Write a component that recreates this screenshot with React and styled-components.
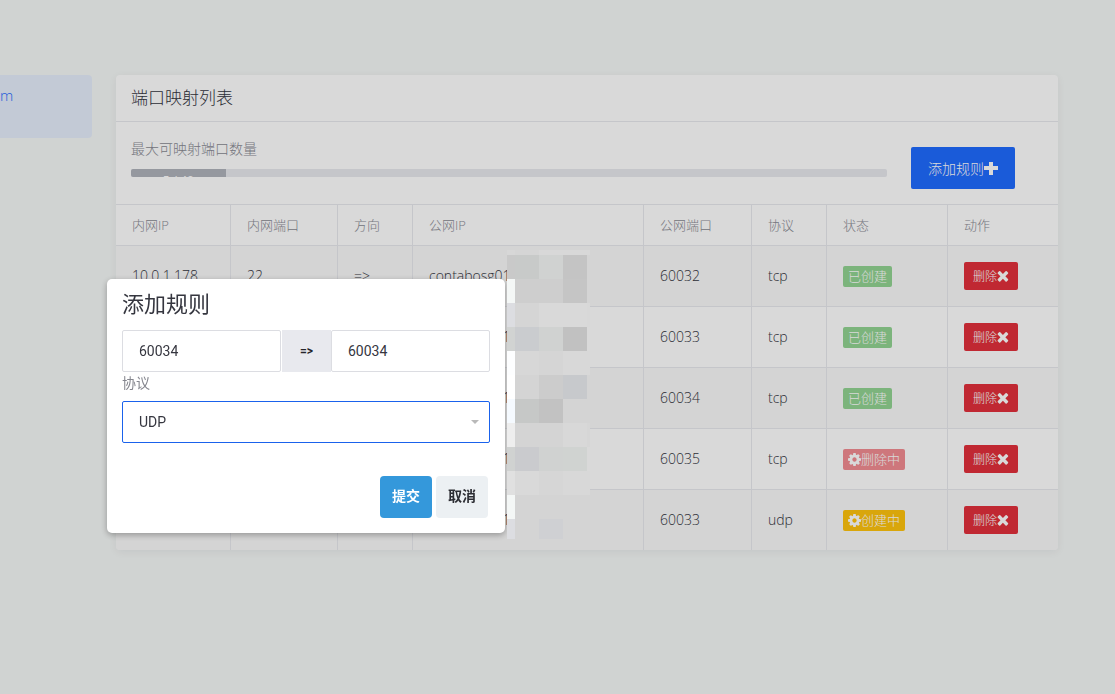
import React, {useState} from 'react'
import styled, {createGlobalStyle} from 'styled-components'

const columns = [
  {text: '内网IP', width: 114},
  {text: '内网端口', width: 107},
  {text: '方向', width: 75},
  {text: '公网IP', width: 231},
  {text: '公网端口', width: 108},
  {text: '协议', width: 75},
  {text: '状态', width: 121},
  {text: '动作', width: 111},
]

const rules = [
  {id: 1, port: '22', publicPort: '60032', protocol: 'tcp', status: 'created'},
  {id: 2, port: '22', publicPort: '60033', protocol: 'tcp', status: 'created'},
  {id: 3, port: '22', publicPort: '60034', protocol: 'tcp', status: 'created'},
  {id: 4, port: '22', publicPort: '60035', protocol: 'tcp', status: 'deleting'},
  {id: 5, port: '22', publicPort: '60033', protocol: 'udp', status: 'creating'},
]

const statuses = {
  created: {text: '已创建', color: '#92d492'},
  deleting: {text: '删除中', color: '#f28c92', busy: true},
  creating: {text: '创建中', color: '#ffc30e', busy: true},
}

// colours of the mask, row by row; '' lets the page show through
const maskTiles = [
  ['#d7d7d7', '#d5d5d5', '#d8d8d8', '#d8d8d8', '#d8d8d8'],
  ['#c9c9c9', '#c8cac9', '#d0d2d1', '#c4c4c4', ''],
  ['#f4f7f6', '#cecece', '#cecece', '#c5c5c5', ''],
  ['#dcdde1', '#d5d5d5', '#d9d9d9', '#d9d9d9', '#d8d8d8'],
  ['#d1d3d2', '#cacccf', '#d0d2d1', '#c1c1c1', ''],
  ['#fdfeff', '#d7d7d7', '#d5d5d5', '#d8d8d8', '#d8d8d8'],
  ['#ffffff', '#d4d4d4', '#cccccc', '#c7c9cc', ''],
  ['#f5faff', '#c6c8c7', '#c2c2c2', '#d4d4d4', ''],
  ['#eeeeee', '#d4d4d4', '#d4d4d4', '#d8d8d8', '#d6d6d6'],
  ['#d0d2d1', '#cacbce', '#d0d2d1', '#d0d3d1', ''],
  ['#e0e0e0', '#d9d9d9', '#d6d6d6', '#d8d8d8', '#d8d8d8'],
  ['#f4f7f6', '#d4d4d4', '#d4d4d4', '#d4d4d4', ''],
  ['#dcdde1', '#d4d4d4', '#cfd0d3', '#d4d4d4', ''],
]

const PlusIcon = () => (
  <Icon size={14} viewBox="0 0 14 14" aria-hidden="true">
    <path d="M5 1h4v4h5v4H9v5H5V9H0V5h5z" />
  </Icon>
)

const CrossIcon = () => (
  <Icon size={12} viewBox="256 250 1300 1340" aria-hidden="true">
    <path d="M1490 1322q0 40-28 68l-136 136q-28 28-68 28t-68-28l-294-294-294 294q-28 28-68 28t-68-28l-136-136q-28-28-28-68t28-68l294-294-294-294q-28-28-28-68t28-68l136-136q28-28 68-28t68 28l294 294 294-294q28-28 68-28t68 28l136 136q28 28 28 68t-28 68l-294 294 294 294q28 28 28 68z" />
  </Icon>
)

const GearIcon = () => (
  <Icon size={13} viewBox="128 128 1536 1536" aria-hidden="true">
    <path d="M1152 896q0-106-75-181t-181-75-181 75-75 181 75 181 181 75 181-75 75-181zm512-109v222q0 12-8 23t-20 13l-185 28q-19 54-39 91 35 50 107 138 10 12 10 25t-9 23q-27 37-99 108t-94 71q-12 0-26-9l-138-108q-44 23-91 38-16 136-29 186-7 28-36 28h-222q-14 0-24.500-8.500t-11.500-21.500l-28-184q-49-16-90-37l-141 107q-10 9-25 9-14 0-25-11-126-114-165-168-7-10-7-23 0-12 8-23 15-21 51-66.500t54-70.500q-27-50-41-99l-183-27q-13-2-21-12.500t-8-23.500v-222q0-12 8-23t19-13l186-28q14-46 39-92-40-57-107-138-10-12-10-24 0-10 9-23 26-36 98.500-107.500t94.500-71.500q13 0 26 10l138 107q44-23 91-38 16-136 29-186 7-28 36-28h222q14 0 24.500 8.500t11.500 21.500l28 184q49 16 90 37l142-107q9-9 24-9 13 0 25 10 129 119 165 170 7 8 7 22 0 12-8 23-15 21-51 66.500t-54 70.500q26 50 41 98l183 28q13 2 21 12.500t8 23.500z" />
  </Icon>
)

const RuleTable = () => (
  <Table>
    <colgroup>
      {columns.map((column) => (
        <Col key={column.text} $width={column.width} />
      ))}
    </colgroup>
    <thead>
      <tr>
        {columns.map((column) => (
          <HeadCell key={column.text} scope="col">{column.text}</HeadCell>
        ))}
      </tr>
    </thead>
    <tbody>
      {rules.map((rule) => {
        const status = statuses[rule.status]
        return (
          <Row key={rule.id}>
            <Cell>10.0.1.178</Cell>
            <Cell>{rule.port}</Cell>
            <Cell>=&gt;</Cell>
            <Cell>contabosg01</Cell>
            <Cell>{rule.publicPort}</Cell>
            <Cell>{rule.protocol}</Cell>
            <Cell>
              <Badge $color={status.color}>
                {status.busy && <GearIcon />}
                {status.text}
              </Badge>
            </Cell>
            <Cell>
              <DeleteButton type="button">删除<CrossIcon /></DeleteButton>
            </Cell>
          </Row>
        )
      })}
    </tbody>
  </Table>
)

const RuleDialog = () => {
  const [from, setFrom] = useState('60034')
  const [to, setTo] = useState('60034')
  const [protocol, setProtocol] = useState('UDP')

  return (
    <Dialog role="dialog" aria-labelledby="dialog-title">
      <DialogTitle id="dialog-title">添加规则</DialogTitle>
      <PortGroup>
        <PortInput aria-label="内网端口" value={from} onChange={(e) => setFrom(e.target.value)} />
        <Arrow>=&gt;</Arrow>
        <PortInput aria-label="公网端口" value={to} onChange={(e) => setTo(e.target.value)} />
      </PortGroup>
      <FieldLabel htmlFor="protocol">协议</FieldLabel>
      <SelectWrap>
        <Select id="protocol" value={protocol} onChange={(e) => setProtocol(e.target.value)}>
          <option>TCP</option>
          <option>UDP</option>
        </Select>
      </SelectWrap>
      <DialogActions>
        <DialogButton type="button" $primary>提交</DialogButton>
        <DialogButton type="button">取消</DialogButton>
      </DialogActions>
    </Dialog>
  )
}

const App = () => (
  <>
    <GlobalStyle />
    <Page>
      <Sidebar>
        <SideLink href="#host">m</SideLink>
      </Sidebar>
      <Card>
        <CardHeader>
          <CardTitle>端口映射列表</CardTitle>
        </CardHeader>
        <Summary>
          <Quota>
            <QuotaLabel id="quota">最大可映射端口数量</QuotaLabel>
            <Track role="progressbar" aria-labelledby="quota" aria-valuenow={5} aria-valuemax={40}>
              <Fill style={{width: `${(5 / 40) * 100}%`}}>5 / 40</Fill>
            </Track>
          </Quota>
          <AddButton type="button">添加规则<PlusIcon /></AddButton>
        </Summary>
        <RuleTable />
      </Card>
    </Page>
    <Backdrop />
    <RuleDialog />
    <Mask aria-hidden="true">
      {maskTiles.flat().map((color, i) => (
        <Tile key={i} $color={color} />
      ))}
    </Mask>
  </>
)

const GlobalStyle = createGlobalStyle`
  *, *::before, *::after {
    box-sizing: border-box;
  }

  body {
    margin: 0;
    overflow: hidden;
    color: #35363f;
    background-color: #f5f8f7;
    font-family: "Open Sans", "Noto Sans CJK SC", sans-serif;
    font-size: 14px;
    font-weight: 300;
    line-height: 20px;
  }

  button, input, select {
    font-family: inherit;
    font-size: inherit;
    font-weight: inherit;
  }
`

const Icon = styled.svg`
  flex: none;
  width: ${({size}) => size}px;
  height: ${({size}) => size}px;
  fill: currentColor;
`

const Page = styled.main`
  display: grid;
  grid-template-columns: 92px minmax(0, 1fr);
  align-items: start;
  gap: 24px;
  min-height: 100vh;
  padding: 75px 57px 75px 0;
`

const Sidebar = styled.nav`
  display: flex;
  flex-direction: column;
`

const SideLink = styled.a`
  height: 63px;
  padding: 10px 0;
  border-radius: 0 4px 4px 0;
  color: #1f6bff;
  background-color: #e6eefc;
  font-size: 15px;
  text-decoration: none;
`

const Card = styled.section`
  overflow: hidden;
  border-radius: 4px;
  background-color: #fff;
  box-shadow: 0 2px 8px rgba(0, 0, 40, 0.06);
`

const CardHeader = styled.header`
  padding: 11px 15px;
  border-bottom: 1px solid #e8e9ee;
`

const CardTitle = styled.h2`
  margin: 0;
  font-size: 17px;
  font-weight: 300;
  line-height: 24px;
`

const Summary = styled.div`
  display: flex;
  align-items: flex-start;
  gap: 24px;
  padding: 17px 43px 15px 15px;
`

const Quota = styled.div`
  flex: 1;
`

const QuotaLabel = styled.div`
  margin-bottom: 10px;
  color: #8a8b94;
`

const Track = styled.div`
  height: 8px;
  overflow: hidden;
  border-radius: 2px;
  background-color: #e8e9ee;
`

const Fill = styled.div`
  height: 100%;
  color: #fff;
  background-color: #b0b3bb;
  font-size: 12px;
  font-weight: 400;
  line-height: 24px;
  text-align: center;
`

const AddButton = styled.button`
  display: flex;
  align-items: center;
  height: 42px;
  margin-top: 8px;
  padding: 0 17px;
  border: 0;
  border-radius: 2px;
  color: #fff;
  background-color: #1f6bff;
`

const Table = styled.table`
  width: 100%;
  border-collapse: separate;
  border-spacing: 0;
  table-layout: fixed;
`

const Col = styled.col`
  width: ${({$width}) => $width}px;
`

const HeadCell = styled.th`
  height: 41px;
  padding: 0 16px;
  border-top: 1px solid #e8e9ee;
  color: #8a8b94;
  font-size: 13px;
  font-weight: 300;
  text-align: left;

  & + & {
    border-left: 1px solid #e8e9ee;
  }
`

const Cell = styled.td`
  height: 61px;
  padding: 0 16px;
  border-top: 1px solid #e8e9ee;

  & + & {
    border-left: 1px solid #e8e9ee;
  }
`

const Row = styled.tr`
  &:nth-child(odd) {
    background-color: #f9f9f9;
  }
`

const Badge = styled.span`
  display: inline-flex;
  align-items: center;
  height: 21px;
  padding: 0 5px;
  border-radius: 2px;
  color: #fff;
  background-color: ${({$color}) => $color};
  font-size: 13px;
  vertical-align: middle;
`

const DeleteButton = styled.button`
  display: flex;
  align-items: center;
  height: 28px;
  padding: 0 9px;
  border: 0;
  border-radius: 2px;
  color: #fff;
  background-color: #e2303b;
  font-size: 12px;
`

const Backdrop = styled.div`
  position: fixed;
  inset: 0;
  background-color: rgba(0, 0, 0, 0.15);
`

const Dialog = styled.div`
  position: fixed;
  top: 279px;
  left: 107px;
  width: 398px;
  padding: 12px 15px 15px;
  border-radius: 5px;
  background-color: #fff;
  box-shadow: 0 2px 6px rgba(0, 0, 0, 0.3);
  font-family: Roboto, "Noto Sans CJK SC", sans-serif;
`

const DialogTitle = styled.h3`
  margin: 0 0 11px;
  font-size: 22px;
  font-weight: 400;
  line-height: 28px;
`

const PortGroup = styled.div`
  display: flex;
`

const PortInput = styled.input`
  flex: 1;
  min-width: 0;
  height: 42px;
  padding: 0 16px;
  border: 1px solid #dcdde2;
  border-radius: 2px;
  color: #35363f;
  font-weight: 400;
  outline: none;
`

const Arrow = styled.span`
  width: 49px;
  margin-left: 1px;
  color: #24252b;
  background-color: #e8e9ee;
  font-size: 12px;
  font-weight: 700;
  line-height: 42px;
  text-align: center;
`

const FieldLabel = styled.label`
  display: block;
  margin: 1px 0 8px;
  color: #85868e;
  font-weight: 400;
`

const SelectWrap = styled.div`
  position: relative;

  &::after {
    content: '';
    position: absolute;
    top: 19px;
    right: 11px;
    border: 4px solid transparent;
    border-top-color: #b9b9b9;
    border-bottom: 0;
    pointer-events: none;
  }
`

const Select = styled.select`
  display: block;
  width: 100%;
  height: 42px;
  padding: 0 16px;
  border: 1px solid #1a62ec;
  border-radius: 2px;
  color: #35363f;
  background-color: #fff;
  font-weight: 400;
  appearance: none;
  outline: none;
`

const DialogActions = styled.div`
  display: flex;
  justify-content: flex-end;
  gap: 4px;
  margin-top: 33px;
  padding-right: 2px;
`

const DialogButton = styled.button`
  width: 52px;
  height: 42px;
  padding: 0 0 4px;
  border: 0;
  border-radius: 4px;
  color: ${({$primary}) => ($primary ? '#fff' : '#2c2d33')};
  background-color: ${({$primary}) => ($primary ? '#3498db' : '#ecf0f3')};
  font-weight: 700;
`

const Mask = styled.div`
  position: fixed;
  top: 250px;
  left: 507px;
  display: grid;
  grid-template-columns: 8px 24px 24px 24px 3px;
  grid-template-rows: 5px repeat(11, 24px) 20px;
  pointer-events: none;
`

const Tile = styled.div`
  background-color: ${({$color}) => $color || 'transparent'};
`

export default App
